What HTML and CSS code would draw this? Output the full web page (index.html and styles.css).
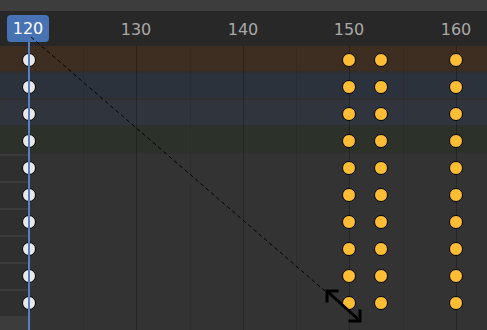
FILE: index.html
```html
<!DOCTYPE html>
<html>
<head>
<meta charset="utf-8">
<link rel="stylesheet" href="styles.css">
</head>
<body>
<div class="editor">
  <div class="topbar"></div>
  <div class="ruler">
    <span class="num" style="left:136px">130</span>
    <span class="num" style="left:243px">140</span>
    <span class="num" style="left:349px">150</span>
    <span class="num" style="left:456px">160</span>
    <span class="current">120</span>
  </div>
  <div class="channels">
    <div class="row c-brown"><div class="band"></div><i class="key sel-no" style="left:29px"></i><i class="key" style="left:349px"></i><i class="key" style="left:381px"></i><i class="key" style="left:456px"></i></div>
    <div class="row c-blue"><div class="band"></div><i class="key sel-no" style="left:29px"></i><i class="key" style="left:349px"></i><i class="key" style="left:381px"></i><i class="key" style="left:456px"></i></div>
    <div class="row c-slate"><div class="band"></div><i class="key sel-no" style="left:29px"></i><i class="key" style="left:349px"></i><i class="key" style="left:381px"></i><i class="key" style="left:456px"></i></div>
    <div class="row c-green"><div class="band"></div><i class="key sel-no" style="left:29px"></i><i class="key" style="left:349px"></i><i class="key" style="left:381px"></i><i class="key" style="left:456px"></i></div>
    <div class="row plain"><i class="key sel-no" style="left:29px"></i><i class="key" style="left:349px"></i><i class="key" style="left:381px"></i><i class="key" style="left:456px"></i></div>
    <div class="row plain"><i class="key sel-no" style="left:29px"></i><i class="key" style="left:349px"></i><i class="key" style="left:381px"></i><i class="key" style="left:456px"></i></div>
    <div class="row plain"><i class="key sel-no" style="left:29px"></i><i class="key" style="left:349px"></i><i class="key" style="left:381px"></i><i class="key" style="left:456px"></i></div>
    <div class="row plain"><i class="key sel-no" style="left:29px"></i><i class="key" style="left:349px"></i><i class="key" style="left:381px"></i><i class="key" style="left:456px"></i></div>
    <div class="row plain"><i class="key sel-no" style="left:29px"></i><i class="key" style="left:349px"></i><i class="key" style="left:381px"></i><i class="key" style="left:456px"></i></div>
    <div class="row plain"><i class="key sel-no" style="left:29px"></i><i class="key" style="left:349px"></i><i class="key" style="left:381px"></i><i class="key" style="left:456px"></i></div>
    <div class="row tail"></div>
  </div>
  <div class="grid">
    <span class="gl minor" style="left:83px"></span>
    <span class="gl" style="left:136px"></span>
    <span class="gl minor" style="left:190px"></span>
    <span class="gl" style="left:243px"></span>
    <span class="gl minor" style="left:296px"></span>
    <span class="gl" style="left:349px"></span>
    <span class="gl minor" style="left:403px"></span>
    <span class="gl" style="left:456px"></span>
  </div>
  <div class="playhead"></div>
  <svg class="overlay" width="487" height="330" viewBox="0 0 487 330">
    <line x1="31" y1="37" x2="325" y2="291" stroke="#000" stroke-width="1" stroke-dasharray="4 3"/>
    <g fill="none" stroke="#000" stroke-width="3" stroke-linecap="square">
      <line x1="328" y1="292" x2="359" y2="320"/>
      <polyline points="337,291 327,291 327,301"/>
      <polyline points="350,321 360,321 360,311"/>
    </g>
  </svg>
</div>
</body>
</html>
```

FILE: styles.css
```css
html, body {
  margin: 0;
  padding: 0;
  background: #333333;
}
.editor {
  position: relative;
  width: 487px;
  height: 330px;
  overflow: hidden;
  font-family: "DejaVu Sans", sans-serif;
  display: flex;
  flex-direction: column;
}
.topbar {
  height: 11px;
  background: #3d3d3d;
}
.ruler {
  position: relative;
  height: 35px;
  background: #282828;
}
.num {
  position: absolute;
  top: 10px;
  transform: translateX(-50%);
  color: #a8a8a8;
  font-size: 16px;
  line-height: 18px;
}
.current {
  position: absolute;
  z-index: 5;
  left: 7px;
  top: 4px;
  width: 42px;
  height: 27px;
  border-radius: 4px;
  background: #4772b3;
  color: #ffffff;
  font-size: 16px;
  line-height: 28px;
  text-align: center;
}
.channels {
  flex: 1;
  display: flex;
  flex-direction: column;
}
.row {
  position: relative;
  height: 27px;
  flex: none;
}
.band {
  height: 25px;
}
.c-brown .band { background: #3e2e21; }
.c-blue .band { background: #2b323c; }
.c-slate .band { background: #30343c; }
.c-green .band { background: #2c312a; }
.c-brown, .c-blue, .c-slate, .c-green { background: #2f2f2f; }
.plain {
  background: #333333;
}
.plain::before {
  content: "";
  position: absolute;
  left: 0;
  top: 0;
  width: 28px;
  height: 25px;
  background: #2f2f2f;
  border-top: 2px solid #3b3b3b;
}
.tail {
  flex: 1;
  background: linear-gradient(to right, #3c3c3c 28px, #333333 28px);
}
.key {
  position: absolute;
  z-index: 3;
  top: 13.5px;
  width: 14px;
  height: 14px;
  box-sizing: border-box;
  border: 1.5px solid #000;
  border-radius: 50%;
  background: #ffbd33;
  transform: translate(-50%, -50%);
}
.key.sel-no {
  background: #e8e8e8;
}
.grid {
  position: absolute;
  left: 0;
  top: 46px;
  right: 0;
  bottom: 0;
  z-index: 1;
  pointer-events: none;
}
.gl {
  position: absolute;
  top: 0;
  bottom: 0;
  width: 1px;
  background: rgba(0, 0, 0, 0.25);
}
.gl.minor {
  background: rgba(0, 0, 0, 0.08);
}
.playhead {
  position: absolute;
  z-index: 4;
  left: 28px;
  top: 41px;
  bottom: 0;
  width: 2px;
  background: #5680c2;
}
.overlay {
  position: absolute;
  left: 0;
  top: 0;
  z-index: 6;
  pointer-events: none;
}
```
